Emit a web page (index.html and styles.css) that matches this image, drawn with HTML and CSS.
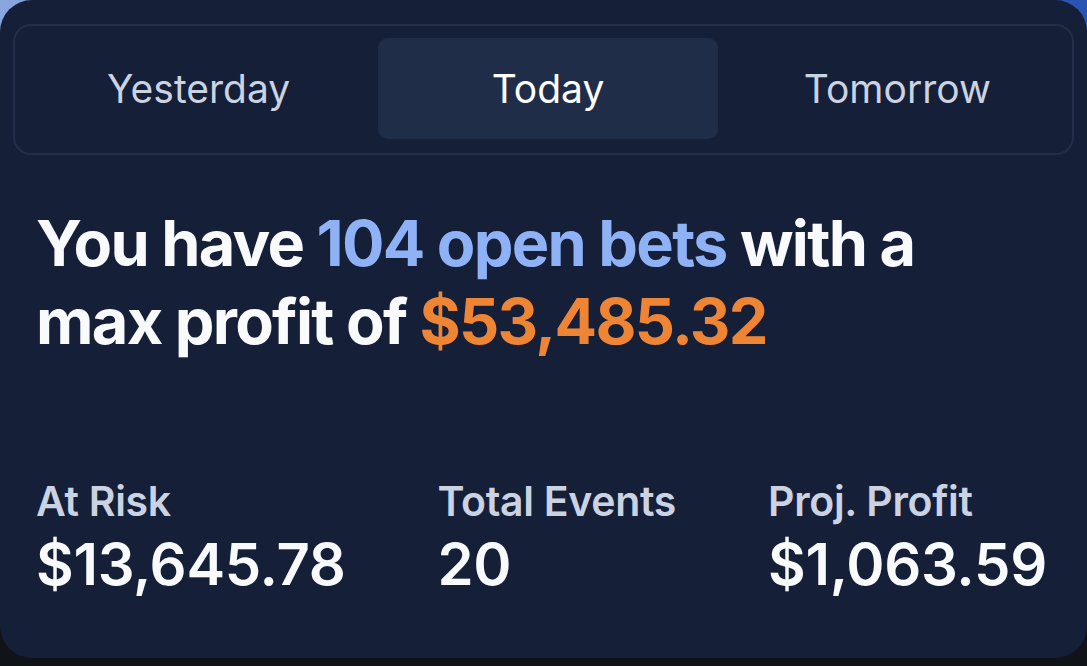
FILE: index.html
```html
<!DOCTYPE html>
<html lang="en">
<head>
    <meta charset="UTF-8">
    <meta name="viewport" content="width=device-width, initial-scale=1.0">
    <title>Open Bets</title>
    <link rel="stylesheet" href="styles.css">
</head>
<body>
    <div class="card">
        <div class="tabs">
            <button class="tab">Yesterday</button>
            <button class="tab active">Today</button>
            <button class="tab">Tomorrow</button>
        </div>

        <h1 class="summary">
            You have <span class="bets">104 open bets</span> with a max profit of <span class="profit">$53,485.32</span>
        </h1>

        <div class="stats">
            <div class="stat">
                <div class="stat-label">At Risk</div>
                <div class="stat-value">$13,645.78</div>
            </div>
            <div class="stat">
                <div class="stat-label">Total Events</div>
                <div class="stat-value">20</div>
            </div>
            <div class="stat">
                <div class="stat-label">Proj. Profit</div>
                <div class="stat-value">$1,063.59</div>
            </div>
        </div>
    </div>
</body>
</html>
```

FILE: styles.css
```css
html, body {
    height: 100%;
}
body {
    margin: 0;
    font-family: Inter, "Noto Sans", sans-serif;
    background:
        linear-gradient(to bottom, transparent 50%, #101318 50%),
        linear-gradient(90deg, #8aa6de 0%, #3b63bd 60%, #2a54b3 100%);
}
.card {
    box-sizing: border-box;
    height: 658px;
    display: flex;
    flex-direction: column;
    background-color: #151f38;
    border-radius: 32px;
    padding: 24px 13px 62px;
}
.tabs {
    display: flex;
    gap: 10px;
    padding: 12px 5px 14px 14px;
    border: 2px solid #222e4a;
    border-radius: 18px;
}
.tab {
    flex: 1;
    height: 101px;
    font-family: inherit;
    font-size: 39px;
    color: #cbd3e2;
    background: none;
    border: none;
    border-radius: 10px;
    cursor: pointer;
}
.tab.active {
    background-color: #202d48;
    color: #ffffff;
}
.summary {
    margin: 49px 23px 0;
    font-size: 63px;
    line-height: 78px;
    font-weight: 700;
    color: #f8fafc;
    letter-spacing: -1.7px;
}
.bets {
    color: #8fb1f6;
}
.profit {
    color: #ee8535;
}
.stats {
    margin-top: auto;
    display: flex;
    justify-content: space-between;
    padding: 0 27px 0 23px;
}
.stat-label {
    font-size: 41px;
    line-height: 48px;
    font-weight: 600;
    color: #cbd3e2;
    letter-spacing: -0.3px;
}
.stat-value {
    margin-top: 7px;
    font-size: 58px;
    line-height: 64px;
    font-weight: 600;
    color: #f8fafc;
    letter-spacing: -0.3px;
}
```
